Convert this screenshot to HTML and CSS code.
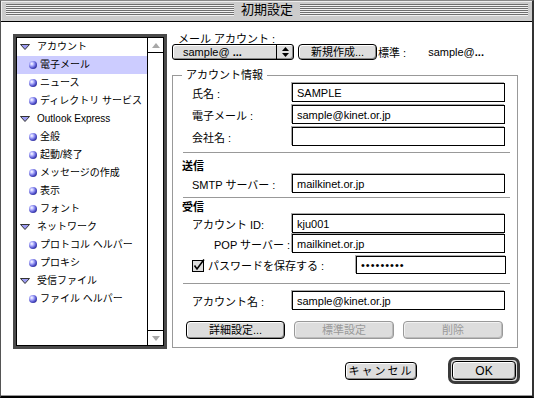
FILE: index.html
```html
<!DOCTYPE html>
<html lang="ja">
<head>
    <meta charset="UTF-8">
    <title>初期設定</title>
    <link rel="stylesheet" href="styles.css">
</head>
<body>
    <div class="window">
        <div class="titlebar">
            <div class="stripes"></div>
            <div class="title">初期設定</div>
            <div class="stripes"></div>
        </div>

        <div class="content">
            <div class="listbox">
                <div class="list-inner">
                    <ul class="tree">
                        <li class="node"><svg class="disclosure" width="10" height="6" viewBox="0 0 10 6"><polygon points="0.5,0.5 9.5,0.5 5,5.5" fill="#9c9cf2" stroke="#333"/></svg>アカウント</li>
                        <li class="leaf selected"><span class="bullet"></span>電子メール</li>
                        <li class="leaf"><span class="bullet"></span>ニュース</li>
                        <li class="leaf"><span class="bullet"></span>ディレクトリ サービス</li>
                        <li class="node"><svg class="disclosure" width="10" height="6" viewBox="0 0 10 6"><polygon points="0.5,0.5 9.5,0.5 5,5.5" fill="#9c9cf2" stroke="#333"/></svg>Outlook Express</li>
                        <li class="leaf"><span class="bullet"></span>全般</li>
                        <li class="leaf"><span class="bullet"></span>起動/終了</li>
                        <li class="leaf"><span class="bullet"></span>メッセージの作成</li>
                        <li class="leaf"><span class="bullet"></span>表示</li>
                        <li class="leaf"><span class="bullet"></span>フォント</li>
                        <li class="node"><svg class="disclosure" width="10" height="6" viewBox="0 0 10 6"><polygon points="0.5,0.5 9.5,0.5 5,5.5" fill="#9c9cf2" stroke="#333"/></svg>ネットワーク</li>
                        <li class="leaf"><span class="bullet"></span>プロトコル ヘルパー</li>
                        <li class="leaf"><span class="bullet"></span>プロキシ</li>
                        <li class="node"><svg class="disclosure" width="10" height="6" viewBox="0 0 10 6"><polygon points="0.5,0.5 9.5,0.5 5,5.5" fill="#9c9cf2" stroke="#333"/></svg>受信ファイル</li>
                        <li class="leaf"><span class="bullet"></span>ファイル ヘルパー</li>
                    </ul>
                    <div class="scrollbar">
                        <div class="scroll-arrow up"><svg width="8" height="5" viewBox="0 0 8 5"><polygon points="4,0 8,5 0,5" fill="#a8a8a8"/></svg></div>
                        <div class="scroll-track"></div>
                        <div class="scroll-arrow down"><svg width="8" height="5" viewBox="0 0 8 5"><polygon points="0,0 8,0 4,5" fill="#a8a8a8"/></svg></div>
                    </div>
                </div>
            </div>

            <div class="panel">
                <div class="acct-label">メール アカウント :</div>
                <div class="acct-row">
                    <div class="popup">
                        <span class="popup-text">sample@ <b>...</b></span>
                        <span class="popup-arrows"><svg width="7" height="10" viewBox="0 0 7 10"><polygon points="3.5,0 7,4 0,4" fill="#000"/><polygon points="0,6 7,6 3.5,10" fill="#000"/></svg></span>
                    </div>
                    <button class="btn btn-new">新規作成...</button>
                    <span class="std-label">標準 :</span>
                    <span class="std-value">sample@<b>...</b></span>
                </div>

                <fieldset class="group">
                    <legend>アカウント情報</legend>

                    <div class="field first">
                        <label class="field-label">氏名 :</label>
                        <input class="text-input" type="text" value="SAMPLE">
                    </div>
                    <div class="field">
                        <label class="field-label">電子メール :</label>
                        <input class="text-input" type="text" value="sample@kinet.or.jp">
                    </div>
                    <div class="field">
                        <label class="field-label">会社名 :</label>
                        <input class="text-input" type="text" value="">
                    </div>

                    <hr class="divider div-send">
                    <div class="heading head-send">送信</div>
                    <div class="field tight">
                        <label class="field-label">SMTP サーバー :</label>
                        <input class="text-input" type="text" value="mailkinet.or.jp">
                    </div>

                    <hr class="divider div-recv">
                    <div class="heading head-recv">受信</div>
                    <div class="field flush">
                        <label class="field-label">アカウント ID:</label>
                        <input class="text-input" type="text" value="kju001">
                    </div>
                    <div class="field tight">
                        <label class="field-label indent">POP サーバー :</label>
                        <input class="text-input" type="text" value="mailkinet.or.jp">
                    </div>
                    <div class="check-row">
                        <svg class="checkbox" width="13" height="13" viewBox="0 0 13 13"><rect x="0.5" y="1.5" width="11" height="11" fill="#ddd" stroke="#000"/><path d="M2.5 6.5 L5 10 L12 0.5" fill="none" stroke="#000" stroke-width="1.6"/></svg>
                        <span class="check-label">パスワードを保存する :</span>
                        <input class="text-input password" type="password" value="123456789">
                    </div>

                    <hr class="divider div-name">
                    <div class="field name-row">
                        <label class="field-label">アカウント名 :</label>
                        <input class="text-input" type="text" value="sample@kinet.or.jp">
                    </div>

                    <div class="group-buttons">
                        <button class="btn btn-wide">詳細設定...</button>
                        <button class="btn btn-wide" disabled>標準設定</button>
                        <button class="btn btn-wide" disabled>削除</button>
                    </div>
                </fieldset>

                <div class="footer">
                    <button class="btn btn-cancel">キャンセル</button>
                    <div class="default-ring">
                        <button class="btn btn-ok">OK</button>
                    </div>
                </div>
            </div>
        </div>
    </div>
</body>
</html>
```

FILE: styles.css
```css
* {
    box-sizing: border-box;
}

body {
    margin: 0;
    background-color: #fff;
    color: #000;
    font-family: "Liberation Sans", "Noto Sans CJK JP", sans-serif;
    font-size: 11px;
}

.window {
    width: 534px;
    height: 398px;
    border-top: 1px solid #888;
    border-left: 1px solid #555;
    border-right: 2px solid #333;
    border-bottom: 2px solid #000;
    display: flex;
    flex-direction: column;
}

/* title bar */
.titlebar {
    height: 21px;
    flex: none;
    display: flex;
    padding: 3px 4px 0 5px;
    background-color: #cccccc;
    border-bottom: 1px solid #000;
    box-shadow: inset 1px 1px 0 #eee;
}

.stripes {
    flex: 1;
    height: 12px;
    background: repeating-linear-gradient(to bottom, #6f6f6f 0 1px, #f2f2f2 1px 2px);
}

.title {
    padding: 0 7px;
    font-size: 13px;
    line-height: 12px;
}

/* main area */
.content {
    flex: 1;
    display: flex;
    align-items: flex-start;
    padding: 12px 0 0 12px;
    border-bottom: 1px solid #999;
    background-color: #fff;
}

/* list on the left */
.listbox {
    width: 154px;
    height: 315px;
    border: 3px solid #4a4a4a;
}

.list-inner {
    height: 100%;
    display: flex;
    border: 1px solid #000;
}

.tree {
    flex: 1;
    margin: 0;
    padding: 0;
    list-style: none;
    font-size: 10px;
}

.tree li {
    height: 18px;
    line-height: 18px;
    display: flex;
    align-items: center;
    white-space: nowrap;
}

.node {
    padding-left: 3px;
}

.disclosure {
    margin-right: 7px;
}

.leaf {
    padding-left: 12px;
}

.leaf.selected {
    background-color: #ccccff;
}

.bullet {
    width: 8px;
    height: 8px;
    margin-right: 3px;
    border-radius: 50%;
    background: radial-gradient(circle at 35% 35%, #fff 0, #b4b4ff 25%, #4a4ac8 60%, #10104a 100%);
}

.scrollbar {
    width: 16px;
    display: flex;
    flex-direction: column;
    border-left: 1px solid #000;
}

.scroll-arrow {
    height: 15px;
    display: flex;
    align-items: center;
    justify-content: center;
}

.scroll-arrow.up {
    border-bottom: 1px solid #000;
}

.scroll-arrow.down {
    border-top: 1px solid #000;
}

.scroll-track {
    flex: 1;
}

/* right side */
.panel {
    width: 346px;
    margin-left: 5px;
}

.acct-label {
    height: 10px;
    line-height: 10px;
    padding-left: 6px;
}

.acct-row {
    display: flex;
    align-items: center;
    height: 16px;
}

.popup {
    width: 122px;
    height: 16px;
    display: flex;
    border: 1px solid #000;
    border-radius: 3px;
    background-color: #dddddd;
    box-shadow: inset 1px 1px 0 #fff, inset -1px -1px 0 #888;
}

.popup-text {
    flex: 1;
    padding-left: 10px;
    line-height: 14px;
}

.popup-arrows {
    width: 17px;
    display: flex;
    align-items: center;
    justify-content: center;
    border-left: 1px solid #000;
}

.btn {
    font-family: "Liberation Sans", "Noto Sans CJK JP", sans-serif;
    font-size: 11px;
    color: #000;
    background-color: #dddddd;
    border: 1px solid #000;
    border-radius: 4px;
    box-shadow: inset 1px 1px 0 #fff, inset -1px -1px 0 #888;
    padding: 0;
    line-height: 14px;
}

.btn:disabled {
    color: #999;
    border-color: #999;
    box-shadow: inset 1px 1px 0 #f2f2f2, inset -1px -1px 0 #bbb;
}

.btn-new {
    width: 79px;
    height: 16px;
    margin-left: 4px;
}

.std-label {
    margin-left: 1px;
}

.std-value {
    margin-left: 22px;
}

/* account info group */
.group {
    margin: 8px 0 0 0;
    padding: 0 0 8px 0;
    border: 1px solid #999;
    min-width: 0;
}

.group legend {
    margin-left: 9px;
    padding: 0 4px;
    line-height: 14px;
}

.field {
    display: flex;
    align-items: center;
    height: 19px;
    margin-top: 3px;
    padding-left: 19px;
}

.field.first {
    margin-top: 1px;
}

.field.tight {
    margin-top: 1px;
}

.field.flush {
    margin-top: 0;
}

.field.name-row {
    margin-top: 7px;
}

.field-label {
    width: 100px;
    white-space: nowrap;
}

.field-label.indent {
    padding-left: 22px;
}

.text-input {
    width: 213px;
    height: 19px;
    padding: 0 4px;
    border: 1px solid #000;
    box-shadow: -1px -1px 0 #aaa;
    font-family: "Liberation Sans", "Noto Sans CJK JP", sans-serif;
    font-size: 11px;
    color: #000;
    background-color: #fff;
    outline: none;
}

.divider {
    height: 1px;
    margin: 0 7px 0 10px;
    border: none;
    background-color: #999;
}

.div-send {
    margin-top: 6px;
}

.div-recv {
    margin-top: 4px;
}

.div-name {
    margin-top: 9px;
}

.heading {
    padding-left: 9px;
    line-height: 14px;
    font-weight: bold;
}

.head-send {
    margin-top: 6px;
}

.head-recv {
    margin-top: 2px;
}

.check-row {
    display: flex;
    align-items: center;
    height: 18px;
    margin-top: 3px;
    padding-left: 19px;
}

.checkbox {
    margin-right: 3px;
}

.check-label {
    white-space: nowrap;
}

.text-input.password {
    width: 150px;
    height: 18px;
    margin-left: auto;
    margin-right: 11px;
    letter-spacing: 1px;
}

.group-buttons {
    display: flex;
    margin-top: 11px;
    padding-left: 13px;
    gap: 9px;
}

.btn-wide {
    width: 100px;
    height: 18px;
}

.btn-wide:first-child {
    width: 99px;
}

/* dialog buttons */
.footer {
    display: flex;
    align-items: center;
    justify-content: flex-end;
    margin-top: 9px;
    margin-right: -2px;
}

.btn-cancel {
    width: 72px;
    height: 18px;
    letter-spacing: 2px;
}

.default-ring {
    width: 72px;
    height: 27px;
    margin-left: 31px;
    padding: 1px;
    border: 3px solid #3a3a3a;
    border-radius: 7px;
    background-color: #ddd;
}

.btn-ok {
    width: 100%;
    height: 100%;
    font-size: 12px;
}
```
